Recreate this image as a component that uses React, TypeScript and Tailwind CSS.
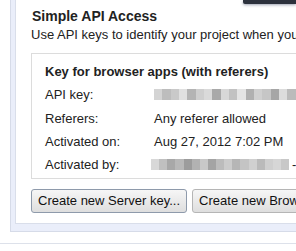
import React from 'react';

const apiKeyBlur = ['#d4d4d4', '#bdbdbd', '#c9c9c9', '#e0e0e0', '#b4b4b4', '#cfcfcf', '#dadada', '#a9a9a9', '#d8d8d8', '#c2c2c2', '#e4e4e4', '#b0b0b0', '#d0d0d0', '#c6c6c6', '#a6a6a6', '#dcdcdc', '#bbbbbb', '#d2d2d2'];
const byBlur = ['#d8d8d8', '#c0c0c0', '#a8a8a8', '#b8b8b8', '#9c9c9c', '#b2b2b2', '#c8c8c8', '#a4a4a4', '#bcbcbc', '#cccccc', '#b6b6b6', '#c4c4c4', '#d0d0d0', '#bababa', '#cfcfcf', '#d6d6d6', '#c8c8c8'];

const Blur = ({ colors, w }: { colors: string[]; w: number }) => (
  <div className="flex h-[11px] blur-[0.6px]" style={{ width: w }}>
    {colors.map((c, i) => (
      <span key={i} className="h-full flex-1" style={{ background: c }} />
    ))}
  </div>
);

const rows = [
  { label: 'API key:', value: 'blur1', h: 'h-[25px]' },
  { label: 'Referers:', value: 'Any referer allowed', h: 'h-[23px]' },
  { label: 'Activated on:', value: 'Aug 27, 2012 7:02 PM', h: 'h-[23px]' },
  { label: 'Activated by:', value: 'blur2', h: 'h-[23px]' },
];

export default function App() {
  return (
    <div className="relative w-[296px] h-[251px] overflow-hidden bg-white text-[#222] font-['Liberation_Sans',Arial,sans-serif]">
      {/* dark menu edge peeking in at the top */}
      <div className="absolute right-0 top-0 w-[53px] h-[4px] bg-[#2c313c] shadow-[0_1px_3px_rgba(60,70,100,0.5)] rounded-bl-[2px]" />

      <div className="ml-[10px] w-[300px] h-[232px] border-l border-b border-[#d6dbe8] bg-[#eaeefa] pl-[4px] pb-[7px]">
        <div className="h-full border-l border-b border-[#d9deea] bg-white pl-[15px] pt-[8px]">
          <div className="text-[14px] font-bold leading-[16px] pl-[1px]">Simple API Access</div>
          <div className="text-[13px] leading-[15px] mt-[3px] whitespace-nowrap text-[#222]">
            Use API keys to identify your project when you need
          </div>

          <div className="mt-[11px] h-[126px] border border-[#dcdcdc] pl-[13px] pt-[10px]">
            <div className="text-[13px] font-bold leading-[16px] whitespace-nowrap">Key for browser apps (with referers)</div>
            <div className="mt-[2px]">
              {rows.map(r => (
                <div key={r.label} className={`flex items-center text-[13px] whitespace-nowrap ${r.h}`}>
                  <div className="w-[109px]">{r.label}</div>
                  {r.value === 'blur1' ? (
                    <Blur colors={apiKeyBlur} w={150} />
                  ) : r.value === 'blur2' ? (
                    <div className="flex items-center -ml-[3px]">
                      <Blur colors={byBlur} w={138} />
                      <span className="ml-[3px]">-</span>
                    </div>
                  ) : (
                    <div>{r.value}</div>
                  )}
                </div>
              ))}
            </div>
          </div>

          <div className="flex gap-[5px] mt-[10px] -ml-[0px]">
            <button className="h-[24px] px-[6px] text-[13px] whitespace-nowrap rounded-[3px] border border-[#8e9aab] bg-gradient-to-b from-[#f6f6f6] to-[#dedede] text-[#111]">
              Create new Server key...
            </button>
            <button className="h-[24px] px-[6px] text-[13px] whitespace-nowrap rounded-[3px] border border-[#b5b5b5] bg-gradient-to-b from-[#f6f6f6] to-[#dedede] text-[#111]">
              Create new Browser key...
            </button>
          </div>
        </div>
      </div>

      <div className="mt-[11px] h-px bg-[#dde1ea]" />
    </div>
  );
}
